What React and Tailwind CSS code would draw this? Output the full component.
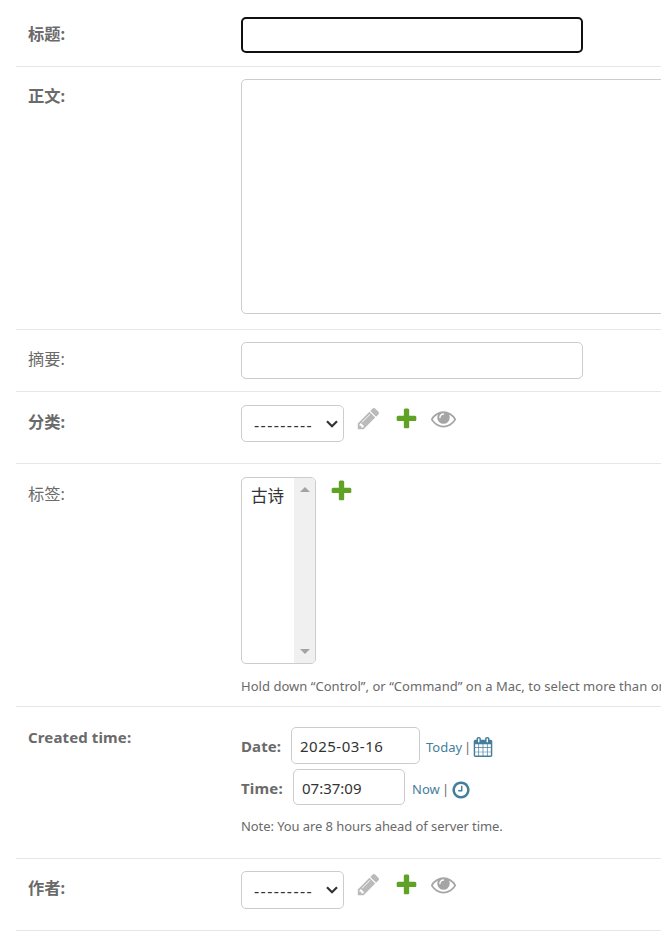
const PATHS = {
  add: "M1600 796v192q0 40-28 68t-68 28h-416v416q0 40-28 68t-68 28h-192q-40 0-68-28t-28-68v-416h-416q-40 0-68-28t-28-68v-192q0-40 28-68t68-28h416v-416q0-40 28-68t68-28h192q40 0 68 28t28 68v416h416q40 0 68 28t28 68z",
  change: "M491 1536l91-91-235-235-91 91v107h128v128h107zm523-928q0-22-22-22-10 0-17 7l-542 542q-7 7-7 17 0 22 22 22 10 0 17-7l542-542q7-7 7-17zm-54-192l416 416-832 832h-416v-416zm683 96q0 53-37 90l-166 166-416-416 166-165q36-38 90-38 53 0 91 38l235 234q37 39 37 91z",
  view: "M1664 960q-152-236-381-353 61 104 61 225 0 185-131.5 316.500t-316.500 131.500-316.500-131.500-131.500-316.500q0-121 61-225-229 117-381 353 133 205 333.500 326.500t434.500 121.500 434.500-121.500 333.500-326.500zm-720-384q0-20-14-34t-34-14q-125 0-214.500 89.500t-89.500 214.500q0 20 14 34t34 14 34-14 14-34q0-86 61-147t147-61q20 0 34-14t14-34zm848 384q0 34-20 69-140 230-376.500 368.500t-499.500 138.500-499.500-139-376.500-368q-20-35-20-69t20-69q140-229 376.500-368t499.500-139 499.500 139 376.500 368q20 35 20 69z",
  clock: "M1024 544v448q0 14-9 23t-23 9h-320q-14 0-23-9t-9-23v-64q0-14 9-23t23-9h224v-352q0-14 9-23t23-9h64q14 0 23 9t9 23zm416 352q0-148-73-273t-198-198-273-73-273 73-198 198-73 273 73 273 198 198 273 73 273-73 198-198 73-273zm224 0q0 209-103 385.500t-279.500 279.500-385.500 103-385.500-103-279.500-279.500-103-385.500 103-385.500 279.500-279.500 385.500-103 385.500 103 279.500 279.500 103 385.500z",
  calendar: "M192 1664h288v-288h-288v288zm352 0h320v-288h-320v288zm-352-352h288v-320h-288v320zm352 0h320v-320h-320v320zm-352-384h288v-288h-288v288zm736 736h320v-288h-320v288zm-384-736h320v-288h-320v288zm768 736h288v-288h-288v288zm-384-352h320v-320h-320v320zm-352-864v-288q0-13-9.500-22.500t-22.500-9.500h-64q-13 0-22.500 9.500t-9.500 22.500v288q0 13 9.500 22.500t22.500 9.500h64q13 0 22.500-9.500t9.500-22.500zm736 864h288v-320h-288v320zm-384-384h320v-288h-320v288zm384 0h288v-288h-288v288zm32-480v-288q0-13-9.500-22.500t-22.500-9.500h-64q-13 0-22.500 9.500t-9.500 22.500v288q0 13 9.500 22.500t22.500 9.500h64q13 0 22.500-9.500t9.500-22.500zm384-64v1280q0 52-38 90t-90 38h-1408q-52 0-90-38t-38-90v-1280q0-52 38-90t90-38h128v-96q0-66 47-113t113-47h64q66 0 113 47t47 113v96h384v-96q0-66 47-113t113-47h64q66 0 113 47t47 113v96h128q52 0 90 38t38 90z",
};

function Icon({ name, className }) {
  return (
    <svg viewBox="0 0 1792 1792" fill="currentColor" className={`block shrink-0 ${className}`}>
      <path d={PATHS[name]} />
    </svg>
  );
}

function Row({ label, bold = true, className, labelClass, children }) {
  return (
    <div className={`flex items-start border-b border-[#e6e6e6] pl-3 ${className}`}>
      <div className={`w-[213px] shrink-0 text-[16.25px] leading-6 ${bold ? "font-bold" : ""} ${labelClass}`}>
        {label}
      </div>
      {children}
    </div>
  );
}

function Select({ className }) {
  return (
    <div className={`flex w-[103px] items-center justify-between rounded-[5px] border border-[#ccc] pl-3 pr-[5px] text-[#333] ${className}`}>
      <span className="pt-0.5 text-[16px] leading-6 tracking-[1.42px]">---------</span>
      <svg viewBox="0 0 12 8" className="h-2 w-3" fill="none" stroke="currentColor" strokeWidth="2.2">
        <path d="M1 1.200l5 5 5-5" />
      </svg>
    </div>
  );
}

function RelatedLinks() {
  return (
    <div className="ml-3 flex">
      <Icon name="change" className="h-[25px] w-[25px] text-[#bababa]" />
      <Icon name="add" className="ml-[13px] h-[25px] w-[25px] text-[#5fa225]" />
      <Icon name="view" className="ml-3 h-[25px] w-[25px] text-[#a5a5a5]" />
    </div>
  );
}

export default function App() {
  return (
    <div className="h-[949px] w-[661px] overflow-hidden bg-white pl-4 font-['Noto_Sans','Noto_Sans_CJK_SC',sans-serif] text-[#6a6a6a]">
      <Row label="标题:" className="h-[67px]" labelClass="pt-[22px]">
        <div className="mt-[17px] h-9 w-[342px] rounded-[5px] border-2 border-[#101010]" />
      </Row>
      <Row label="正文:" className="h-[263px]" labelClass="pt-[17px]">
        <div className="mt-3 h-[235px] w-[763px] shrink-0 rounded-[5px] border border-[#ccc]" />
      </Row>
      <Row label="摘要:" bold={false} className="h-[62px]" labelClass="pt-[17px]">
        <div className="mt-3 h-[37px] w-[342px] rounded-[5px] border border-[#ccc]" />
      </Row>
      <Row label="分类:" className="h-[72px]" labelClass="pt-[18px]">
        <div className="flex pt-[13px]">
          <Select className="h-[37px]" />
          <div className="pt-px"><RelatedLinks /></div>
        </div>
      </Row>
      <Row label="标签:" bold={false} className="h-[243px]" labelClass="pt-[18px]">
        <div className="pt-[13px]">
          <div className="flex">
            <div className="flex h-[187px] w-[75px] justify-between overflow-hidden rounded-[5px] border border-[#ccc]">
              <div className="pl-[9px] pt-1.5 text-[16.500px] leading-6 text-[#333]">古诗</div>
              <div className="flex w-[21px] flex-col items-center justify-between bg-[#f0f0f0] py-[9px] text-[#a3a3a3]">
                <svg viewBox="0 0 10 5" className="h-[5px] w-2.5" fill="currentColor"><path d="M0 5L5 0l5 5z" /></svg>
                <svg viewBox="0 0 10 5" className="h-[5px] w-2.5" fill="currentColor"><path d="M0 0l5 5 5-5z" /></svg>
              </div>
            </div>
            <Icon name="add" className="ml-[13px] mt-px h-[25px] w-[25px] text-[#5fa225]" />
          </div>
          <div className="mt-3 whitespace-nowrap text-[13px] leading-5 tracking-[0.03px]">
            Hold down “Control”, or “Command” on a Mac, to select more than one.
          </div>
        </div>
      </Row>
      <Row label="Created time:" className="h-[152px]" labelClass="pt-[18px] text-[15px]! tracking-[0.13px]">
        <div className="pt-5">
          <div className="flex h-[37px] items-center text-[13px]">
            <span className="w-[50px] pt-0.5 text-[15px] font-bold tracking-[0.1px]">Date:</span>
            <div className="flex h-[37px] w-[129px] items-center rounded-[5px] border border-[#ccc] pl-2 pt-0.5 text-[15px] tracking-[0.5px] text-[#333]">2025-03-16</div>
            <span className="ml-1.5 w-[36px] whitespace-nowrap pt-1 text-[#447e9b]">Today</span>
            <span className="ml-[2px] w-[9px] pt-1">|</span>
            <Icon name="calendar" className="mt-[3px] h-5 w-5 text-[#447e9b]" />
          </div>
          <div className="mt-[5px] flex h-9 items-center text-[13px]">
            <span className="w-[52px] pt-0.5 text-[15px] font-bold tracking-[0.2px]">Time:</span>
            <div className="flex h-9 w-[112px] items-center rounded-[5px] border border-[#ccc] pl-2 pt-0.5 text-[15px] text-[#333]">07:37:09</div>
            <span className="ml-[7px] w-[28px] whitespace-nowrap pt-[5px] text-[#447e9b]">Now</span>
            <span className="ml-[2px] w-[9px] pt-[5px]">|</span>
            <Icon name="clock" className="mt-[5px] h-5 w-5 text-[#447e9b]" />
          </div>
          <div className="mt-[11px] whitespace-nowrap text-[13px] leading-5 tracking-[-0.08px]">
            Note: You are 8 hours ahead of server time.
          </div>
        </div>
      </Row>
      <Row label="作者:" className="h-[72px]" labelClass="pt-[17px]">
        <div className="flex pt-3">
          <Select className="h-[38px]" />
          <div className="pt-px"><RelatedLinks /></div>
        </div>
      </Row>
    </div>
  );
}
